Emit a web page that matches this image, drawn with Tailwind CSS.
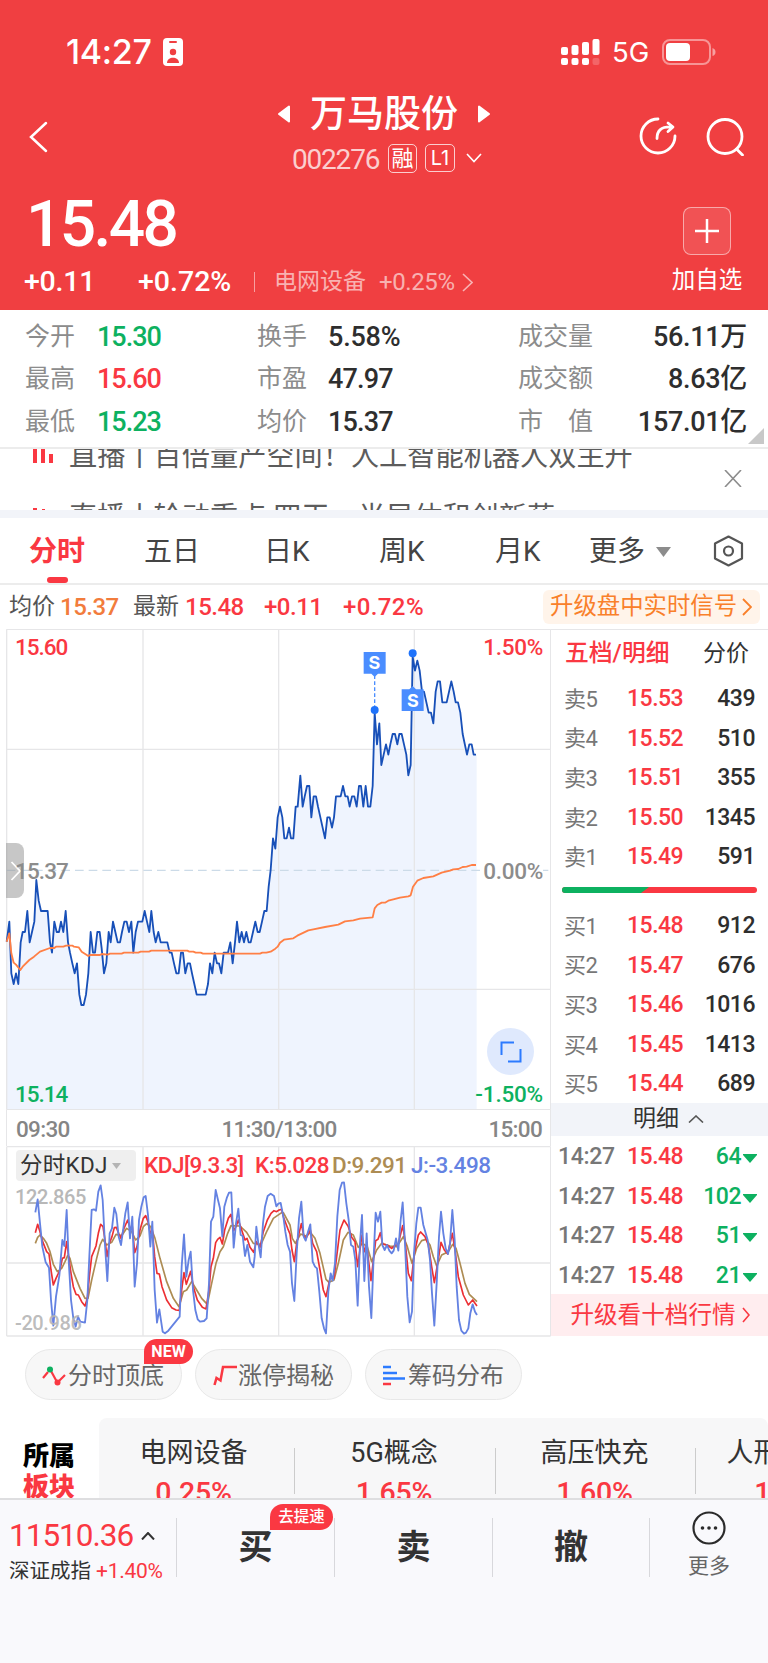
<!DOCTYPE html>
<html lang="zh-CN">
<head>
    <meta charset="UTF-8">
    <meta name="viewport" content="width=device-width, initial-scale=1.0">
    <script src="https://cdn.jsdelivr.net/npm/@tailwindcss/browser@4"></script>
    <title>万马股份 002276</title>
</head>
<body class="w-[768px] bg-white font-['Roboto','Noto_Sans_CJK_SC',sans-serif] text-[#333]">
<div class="flex h-[1663px] flex-col overflow-hidden">

<!-- header -->
<header class="flex h-[310px] shrink-0 flex-col bg-[#f03f41] text-white">
    <div class="flex h-[76px] items-center pl-[66px] pr-[52px] pt-[27px] font-['Inter']">
        <span class="w-[97px] text-[34px] leading-[49px] tracking-[-0.3px] font-medium">14:27</span>
        <svg class="h-7 w-5" viewBox="0 0 20 28"><rect width="20" height="28" rx="4" fill="#fff"/><rect x="6" y="3" width="8" height="2" rx="1" fill="#f03f41"/><circle cx="10" cy="14" r="3.2" fill="#f03f41"/><path d="M4 25c0-7 12-7 12 0z" fill="#f03f41"/></svg>
        <svg class="ml-auto h-7 w-10" viewBox="0 0 40 28" fill="#fff"><rect x="1" y="9" width="7" height="8" rx="2"/><rect x="11.500" y="7" width="7" height="10" rx="2"/><rect x="22" y="4" width="7" height="13" rx="2"/><rect x="32.500" y="1" width="7" height="16" rx="2"/><rect x="1" y="20" width="7" height="7" rx="2"/><rect x="11.500" y="20" width="7" height="7" rx="2"/><rect x="22" y="20" width="7" height="7" rx="2"/><rect x="32.500" y="20" width="7" height="7" rx="2" opacity=".2"/></svg>
        <span class="ml-[12px] w-[50px] pt-[2px] text-[27.500px]">5G</span>
        <svg class="h-[26px] w-[54px]" viewBox="0 0 54 26"><rect x="1" y="1" width="47" height="24" rx="7" fill="none" stroke="#fff" stroke-opacity=".45" stroke-width="2"/><rect x="4" y="4" width="24" height="18" rx="4" fill="#fff"/><path d="M50.500 9q3 1 3 4t-3 4z" fill="#fff" opacity=".5"/></svg>
    </div>
    <div class="flex h-[104px] items-center pl-[28px] pr-[24px]">
        <svg class="mt-[18px] h-8 w-5" viewBox="0 0 20 32" fill="none" stroke="#fff" stroke-width="2.500" stroke-linecap="round"><path d="M18 2L3 16l15 14"/></svg>
        <div class="ml-[145px] w-[382px]">
            <div class="flex h-[52px] items-center justify-center gap-[20px] pt-[18px]">
                <svg class="h-[18px] w-3" viewBox="0 0 12 18" fill="#fff"><path d="M11 1.500v15L1 9z" stroke="#fff" stroke-linejoin="round" stroke-width="2"/></svg>
                <h1 class="pt-px text-[37px] leading-[44px] font-medium">万马股份</h1>
                <svg class="h-[18px] w-3" viewBox="0 0 12 18" fill="#fff"><path d="M1 1.500v15L11 9z" stroke="#fff" stroke-linejoin="round" stroke-width="2"/></svg>
            </div>
            <div class="flex h-[46px] items-center justify-center pl-[6px] pt-[8px]">
                <span class="w-[96px] pt-[3px] text-[28px] tracking-[-1.200px] text-white/75">002276</span>
                <span class="flex h-[29px] w-[29px] items-center justify-center rounded-[5px] border border-white/75 text-[22px]">融</span>
                <span class="ml-2 flex h-[28px] w-[30px] items-center justify-center rounded-[5px] border border-white/75 font-['Inter'] text-[20px]">L1</span>
                <svg class="ml-[11px] h-[10px] w-[16px]" viewBox="0 0 16 10" fill="none" stroke="#fff" stroke-width="1.600"><path d="M1 1l7 7.500L15 1"/></svg>
            </div>
        </div>
        <svg class="ml-auto mt-[16px] h-[38px] w-[38px]" viewBox="0 0 38 38" fill="none" stroke="#fff" stroke-width="2.800" stroke-linecap="round" stroke-linejoin="round"><path d="M19 2A17 17 0 1 0 36 19"/><path d="M18 21.500c0-8 4-12 14.500-11.500M29 6L34 10l-5 4.500"/></svg>
        <svg class="ml-[29px] mt-[18px] h-[38px] w-[38px]" viewBox="0 0 38 38" fill="none" stroke="#fff" stroke-width="2.800" stroke-linecap="round"><circle cx="19" cy="18.500" r="17"/><path d="M30.500 31l6 6"/></svg>
    </div>
    <div class="flex grow justify-between pl-[24px] pr-[23px]">
        <div>
            <p class="h-[78px] pl-[2px] text-[64px] leading-[89px] tracking-[-2.600px] font-medium">15.48</p>
            <div class="flex h-[47px] items-center pt-px text-[28.500px] tracking-[-0.200px] font-medium">
                <span class="w-[114px]">+0.11</span>
                <span class="w-[116px] tracking-normal">+0.72%</span>
                <span class="h-5 w-px bg-white/50"></span>
                <span class="ml-[19px] w-[105px] text-[23px] tracking-normal font-normal text-white/60">电网设备</span>
                <span class="w-[83px] text-[24px] tracking-[-0.400px] font-normal text-white/60">+0.25%</span>
                <svg class="h-[19px] w-[11px]" viewBox="0 0 11 19" fill="none" stroke="#fff" stroke-opacity=".6" stroke-width="1.600"><path d="M1 1l9 8.500L1 18"/></svg>
            </div>
        </div>
        <div class="flex w-[76px] flex-col items-center pt-[27px]">
            <span class="flex h-12 w-12 items-center justify-center rounded-lg border border-white/50 bg-white/10">
                <svg class="h-6 w-6" viewBox="0 0 24 24" stroke="#fff" stroke-width="2.500"><path d="M12 0v24M0 12h24"/></svg>
            </span>
            <span class="mt-[8px] text-[23.500px] leading-[34px]">加自选</span>
        </div>
    </div>
</header>

<!-- quote figures -->
<section class="relative grid h-[139px] shrink-0 grid-cols-[72px_160px_71px_190px_90px_139px] content-start border-b-2 border-[#ececec] pl-[25px] pr-[21px] pt-[6px] leading-[41.300px] text-[25px] text-[#8c8c8c]">
    <span>今开</span><b class="pt-px text-[27px] tracking-[-1px] font-medium text-[#0db160]">15.30</b>
    <span>换手</span><b class="pt-px text-[27px] tracking-[-0.200px] font-medium text-[#2e2e2e]">5.58%</b>
    <span>成交量</span><b class="pt-px text-right text-[27px] tracking-[-0.300px] font-medium text-[#2e2e2e]">56.11万</b>
    <span>最高</span><b class="pt-px text-[27px] tracking-[-1px] font-medium text-[#fa3842]">15.60</b>
    <span>市盈</span><b class="pt-px text-[27px] tracking-[-0.800px] font-medium text-[#2e2e2e]">47.97</b>
    <span>成交额</span><b class="pt-px text-right text-[27px] tracking-[-0.300px] font-medium text-[#2e2e2e]">8.63亿</b>
    <span>最低</span><b class="pt-px text-[27px] tracking-[-1px] font-medium text-[#0db160]">15.23</b>
    <span>均价</span><b class="pt-px text-[27px] tracking-[-0.800px] font-medium text-[#2e2e2e]">15.37</b>
    <span>市　值</span><b class="pt-px text-right text-[27px] tracking-[-0.300px] font-medium text-[#2e2e2e]">157.01亿</b>
    <svg class="absolute bottom-[3px] right-1 h-4 w-4" viewBox="0 0 16 16"><path d="M16 0v16H0z" fill="#c8c8c8"/></svg>
</section>

<!-- scrolling live notices -->
<section class="flex h-[61px] shrink-0 overflow-hidden pl-[32px] pr-[26px] text-[28.200px] leading-[61px] text-[#5c5c5c]">
    <div class="w-[37px] shrink-0">
        <svg class="h-[62px] w-6" viewBox="0 0 24 62" fill="#fa3842"><path d="M1 0h4v14H1zM9 0h4v14H9zM17 5h4v9h-4zM1 59h4v3H1zM10 60h3v2h-3z"/></svg>
    </div>
    <div class="-mt-[23px] grow whitespace-nowrap">
        <p>直播丨百倍量产空间！人工智能机器人双主升</p>
        <p>直播丨轮动重点 四天，半导体和创新药</p>
    </div>
    <svg class="mt-[21px] h-[17px] w-[18px]" viewBox="0 0 18 17" stroke="#8c8c8c" stroke-width="1.600"><path d="M1 0l16 17M17 0L1 17"/></svg>
</section>
<div class="h-2 shrink-0 bg-[#f2f4f9]"></div>

<!-- chart tabs -->
<nav class="flex h-[67px] shrink-0 border-b-2 border-[#ececec] pl-[29px] text-[28px] leading-[67px] text-[#444]">
    <div class="relative w-[115px] font-bold text-[#fa3842]">分时<i class="absolute bottom-0 left-[18px] h-[6px] w-[21px] rounded-full bg-[#fa3842]"></i></div>
    <span class="w-[120px]">五日</span>
    <span class="w-[115px]">日K</span>
    <span class="w-[116px]">周K</span>
    <span class="w-[94px]">月K</span>
    <span class="w-[67px]">更多</span>
    <svg class="mt-[29px] h-[10px] w-[15px]" viewBox="0 0 15 10"><path d="M0 0h15L7.500 10z" fill="#8c8c8c"/></svg>
    <svg class="ml-[42px] mt-[17px] h-8 w-[31px]" viewBox="0 0 31 32" fill="none" stroke="#555" stroke-width="2.200" stroke-linejoin="round"><path d="M15.500 1.500L29 8.500v15l-13.500 7L2 23.500v-15z"/><circle cx="15.500" cy="16" r="4.500"/></svg>
</nav>
<div class="flex h-[44px] shrink-0 items-center pl-[9px] pr-2 text-[24px] tracking-[-0.500px] font-medium text-[#fa3842]">
    <span class="w-[51px] text-[23px] tracking-normal font-normal text-[#555]">均价</span><span class="w-[73px] text-[#f27c3c]">15.37</span>
    <span class="w-[52px] text-[23px] tracking-normal font-normal text-[#555]">最新</span><span class="w-[79px]">15.48</span>
    <span class="w-[79px]">+0.11</span><span class="tracking-[0.400px]">+0.72%</span>
    <a class="ml-auto flex h-[34px] w-[217px] items-center gap-[5px] rounded-md bg-[#fff4ea] pl-[7px] text-[23.400px] tracking-normal font-normal text-[#f9802a]">升级盘中实时信号<svg class="h-[18px] w-[10px]" viewBox="0 0 10 18" fill="none" stroke="#f9802a" stroke-width="1.800"><path d="M1 1l8 8-8 8"/></svg></a>
</div>

<main class="flex h-[709px] shrink-0">
    <div class="w-[551px]">
        <!-- price chart -->
        <div class="relative h-[481px]">
            <svg class="h-[481px] w-[551px]" viewBox="0 0 551 481" fill="none">
                <g transform="translate(0 -9) scale(.33333)" stroke-linejoin="round">
                    <path id="area" fill="#eff4fe"/>
                    <path d="M20 28H1652M20 388H1652M20 1108H1652M20 1469H1652M20 28V1469M429 28V1469M836 28V1469M1243 28V1469M1652 28V1469" stroke="#e6e6e8" stroke-width="4"/>
                    <path d="M20 751H1652" stroke="#ccdbe8" stroke-width="4" stroke-dasharray="26 15"/>
                    <polyline id="price" stroke="#1850b8" stroke-width="5.500" points="20,965 28,905 34,1060 41,1092 48,1060 55,1092 62,967 68,936 75,936 82,873 89,967 96,936 103,905 109,780 116,842 123,873 143,873 150,967 156,998 163,905 170,936 177,936 183,905 190,936 197,873 204,967 210,998 217,1030 224,1060 231,1030 238,1124 244,1155 251,1155 258,1124 265,1060 272,936 279,998 285,998 292,936 299,936 305,985 312,1060 319,1030 326,936 332,967 339,905 346,936 353,967 360,967 366,936 373,905 380,905 387,936 394,905 400,998 407,936 414,905 427,905 434,873 441,905 448,936 454,873 461,936 467,967 475,936 482,967 502,967 509,998 515,998 522,1030 529,1060 536,1060 543,998 549,998 556,1060 563,1030 570,1030 576,1060 583,1092 590,1124 617,1124 624,1092 630,1030 637,1060 644,998 651,1030 657,1030 664,1060 671,998 684,998 691,967 698,1030 705,967 711,905 718,967 725,936 732,967 739,936 746,967 752,967 759,936 766,905 773,936 779,936 786,905 793,873 800,873 806,800 812,750 819,655 826,686 833,592 840,560 847,592 853,655 860,655 867,623 873,655 880,655 887,560 893,560 901,467 908,560 914,530 921,498 928,498 934,592 941,529 948,529 954,560 975,655 982,592 989,592 996,623 1002,592 1008,529 1022,529 1029,498 1036,529 1043,529 1049,560 1056,529 1063,529 1070,560 1077,498 1083,498 1090,560 1097,498 1104,560 1111,560 1118,498 1124,278 1131,373 1138,310 1144,435 1151,404 1158,373 1165,404 1171,373 1178,342 1185,342 1192,373 1198,342 1205,342 1212,373 1219,404 1225,466 1232,435 1238,110 1245,152 1252,122 1259,152 1266,215 1272,215 1286,278 1293,278 1300,310 1307,215 1313,184 1320,184 1327,247 1340,247 1354,184 1361,215 1367,247 1374,247 1381,278 1388,342 1401,404 1408,373 1415,373 1421,404 1428,404"/>
                    <polyline stroke="#ff7f45" stroke-width="5.500" points="20,965 28,940 34,1000 41,1028 48,1034 61,1050 68,1040 88,1020 102,1010 120,995 150,984 163,984 168,980 190,980 198,977 218,977 222,980 236,982 245,995 265,1008 270,1005 300,1005 305,1002 323,1004 330,1001 365,1001 372,998 415,998 422,995 447,995 454,992 562,992 568,995 580,995 587,998 602,998 609,1001 780,1001 787,998 799,998 812,995 826,986 833,980 840,968 852,959 880,955 892,947 925,931 940,928 975,921 1015,914 1035,904 1060,901 1080,896 1118,892 1124,865 1132,855 1145,848 1155,848 1165,842 1180,838 1200,833 1225,829 1232,826 1239,800 1252,782 1270,774 1300,769 1325,758 1350,752 1360,748 1375,747 1388,741 1400,740 1415,735 1428,735"/>
                    <path d="M1124 166V262" stroke="#4a8dff" stroke-width="4" stroke-dasharray="11 7"/>
                    <g fill="#1f73fb"><circle cx="1124" cy="270" r="12"/><circle cx="1238" cy="100" r="12"/></g>
                    <g fill="#4a8dff"><path d="M1091 96h66v65h-23l-10 10-10-10h-23zM1205 208h23l10-10 10 10h23v65h-66z"/></g>
                </g>
                <g fill="#fff" font-family="Inter" font-size="18" font-weight="700" text-anchor="middle"><text x="374.500" y="40.300">S</text><text x="412.800" y="78.300">S</text></g>
            </svg>
            <span class="absolute left-[15px] top-[3px] text-[22.500px] leading-[30px] tracking-[-1px] font-medium text-[#fa3842]">15.60</span>
            <span class="absolute left-[15px] top-[450px] text-[22.500px] leading-[30px] tracking-[-1px] font-medium text-[#0db160]">15.14</span>
            <span class="absolute left-[6px] top-[214px] flex h-[55px] w-[18px] items-center rounded-r-lg bg-[#999]/55 pl-1"><svg class="h-5 w-3" viewBox="0 0 12 20" fill="none" stroke="#fff" stroke-width="1.800"><path d="M1.500 1l8.500 9-8.500 9"/></svg></span>
            <span class="absolute left-[15px] top-[227px] text-[22.500px] leading-[30px] tracking-[-0.900px] font-medium text-[#8c8c8c]">15.37</span>
            <span class="absolute right-[8px] top-[3px] text-[22.500px] leading-[30px] tracking-[-0.300px] font-medium text-[#fa3842]">1.50%</span>
            <span class="absolute right-[8px] top-[227px] bg-white text-[22.500px] leading-[30px] tracking-[-0.300px] font-medium text-[#8c8c8c]">0.00%</span>
            <span class="absolute right-[8px] top-[450px] text-[22.500px] leading-[30px] tracking-[-0.200px] font-medium text-[#0db160]">-1.50%</span>
            <span class="absolute left-[487px] top-[399px] flex h-[47px] w-[47px] items-center justify-center rounded-full bg-[#dfe9fd]"><svg class="h-[22px] w-[22px]" viewBox="0 0 22 22" fill="none" stroke="#2c7bff" stroke-width="2"><path d="M14 1.500H1.500V14M8 20.500h12.500V8"/></svg></span>
        </div>
        <div class="ml-[6px] flex h-[36px] items-center justify-between border-x border-[#e6e6e8] pl-[9px] pr-[8px] pt-1 text-[22.500px] tracking-[-0.700px] font-medium text-[#858585]">
            <span>09:30</span><span>11:30/13:00</span><span>15:00</span>
        </div>
        <!-- KDJ indicator -->
        <div class="relative h-[192px]">
            <span class="absolute left-[15px] top-[33px] text-[20px] leading-[36px] tracking-[-0.400px] font-medium text-[#b8b8b8]">122.865</span>
            <svg class="relative h-[192px] w-[551px]" viewBox="0 0 551 192" fill="none">
                <g transform="translate(0 -36) scale(.33333)" stroke-linejoin="round">
                    <path d="M20 110H1652M20 459H1652M20 678H1652M20 110V678M429 110V678M836 110V678M1243 110V678M1652 110V678" stroke="#e6e6e8" stroke-width="4"/>
                    <polyline stroke="#ad8c53" stroke-width="5" points="106,400 113,382 120,375 130,385 140,400 150,425 160,463 172,485 185,475 195,455 203,437 210,445 220,485 240,535 255,565 264,565 275,510 290,445 300,405 308,388 320,405 335,397 348,373 365,377 380,355 395,365 407,390 420,378 430,350 440,341 452,350 465,385 480,445 500,515 520,565 537,590 550,545 560,540 575,515 590,540 605,565 622,583 635,520 648,460 660,425 670,410 683,370 693,347 720,348 740,367 760,400 783,403 800,365 820,325 845,308 850,308 870,345 877,385 886,400 902,372 917,378 932,368 945,385 960,430 978,508 987,517 1002,510 1015,460 1030,390 1044,367 1060,375 1075,412 1088,400 1102,410 1115,455 1130,420 1145,400 1170,408 1190,410 1210,380 1222,410 1236,460 1250,415 1265,392 1278,388 1290,405 1300,440 1310,468 1325,435 1345,425 1358,403 1368,415 1380,460 1395,520 1408,553 1431,575"/>
                    <polyline stroke="#ec2f33" stroke-width="5" points="106,368 113,343 120,365 128,395 140,425 147,432 153,480 160,525 168,505 180,480 187,445 193,443 200,395 206,440 213,490 220,530 228,553 235,555 245,575 255,588 262,565 268,500 275,440 288,408 295,370 302,343 309,350 315,390 321,440 328,400 336,380 343,353 349,352 356,370 363,385 372,355 383,330 390,355 397,350 404,428 411,410 420,360 430,325 437,317 444,335 451,370 457,360 464,440 471,490 478,492 486,530 500,570 515,593 528,600 538,601 545,540 552,488 559,523 572,484 580,530 592,570 607,592 618,597 627,540 633,470 640,445 647,398 653,388 660,382 667,402 674,360 685,325 693,313 701,362 708,350 715,330 725,360 735,390 741,385 750,412 761,427 769,395 780,412 790,365 802,330 813,310 822,302 830,305 837,300 845,298 850,320 863,355 870,372 876,420 883,455 890,400 904,341 911,375 918,385 931,360 938,400 950,425 960,480 970,540 978,560 990,505 1002,505 1010,440 1020,360 1032,330 1045,350 1055,382 1065,395 1073,470 1086,375 1093,425 1100,405 1113,512 1127,392 1134,388 1141,368 1148,402 1161,405 1175,415 1187,405 1194,405 1208,347 1215,390 1225,490 1234,512 1243,430 1255,375 1262,366 1275,380 1285,405 1295,470 1303,518 1313,460 1323,397 1333,420 1343,432 1357,370 1365,420 1375,500 1390,555 1405,585 1418,570 1431,588"/>
                    <polyline stroke="#6482e2" stroke-width="5.500" points="106,307 113,268 120,340 127,410 137,457 147,473 153,570 160,647 168,560 178,497 187,390 193,408 200,300 206,450 213,570 220,625 227,650 234,620 241,635 255,638 262,570 268,440 275,300 282,298 288,302 295,245 302,226 308,270 315,405 322,513 329,370 336,355 343,293 349,312 356,380 363,405 370,355 376,310 383,277 390,385 397,320 404,530 411,460 417,330 424,290 431,262 437,258 444,315 451,410 457,335 464,540 471,638 478,598 488,665 495,670 505,662 539,620 545,470 552,373 559,500 566,450 572,425 579,540 586,600 593,628 600,635 612,633 620,625 627,520 633,335 640,320 647,240 654,270 660,295 667,380 673,290 681,262 687,248 694,247 701,413 708,340 715,296 722,375 728,378 735,438 742,405 750,455 760,472 764,440 769,350 775,400 782,442 789,340 795,290 803,258 812,251 822,258 829,289 835,281 842,279 850,320 856,365 863,405 870,425 876,520 883,573 890,430 897,325 904,275 911,380 917,392 924,365 931,343 938,455 945,470 951,475 958,545 965,625 972,655 978,670 985,545 992,490 998,512 1005,460 1012,320 1019,240 1026,218 1032,217 1039,280 1046,330 1053,405 1060,410 1066,450 1073,587 1080,400 1086,315 1093,513 1100,370 1107,530 1114,624 1121,440 1127,308 1134,335 1141,305 1147,405 1154,420 1161,405 1168,422 1175,430 1181,422 1188,385 1195,422 1202,330 1208,277 1215,400 1222,560 1229,637 1236,605 1242,430 1249,340 1255,293 1262,293 1270,345 1283,390 1290,450 1296,550 1303,647 1310,520 1317,380 1323,305 1330,370 1337,415 1344,432 1350,400 1357,300 1364,390 1370,530 1377,630 1384,662 1392,671 1398,668 1405,655 1411,610 1418,583 1425,605 1431,615"/>
                </g>
            </svg>
            <span class="absolute left-[15px] top-[159px] text-[20px] leading-[36px] tracking-[-0.400px] font-medium text-[#b4b4b4]/90">-20.986</span>
            <div class="absolute left-[16px] top-[4px] flex h-[31px] items-center text-[22.500px] tracking-[-0.500px] font-medium whitespace-nowrap">
                <span class="flex h-[31px] w-[120px] items-center gap-[4px] rounded bg-[#efefef] pl-1 text-[22.500px] tracking-[0.300px] font-normal">分时KDJ<svg class="h-[6px] w-[9px]" viewBox="0 0 9 6"><path d="M0 0h9L4.500 6z" fill="#b4b4b4"/></svg></span>
                <span class="ml-2 w-[111px] text-[#fa3842]">KDJ[9.3.3]</span>
                <span class="w-[77px] text-[#fa3842]">K:5.028</span>
                <span class="w-[79px] text-[#ad8c53]">D:9.291</span>
                <span class="text-[#6482e2]">J:-3.498</span>
            </div>
        </div>
    </div>

    <!-- order book -->
    <aside class="w-[217px] text-[23px] tracking-[-0.500px]">
        <div class="flex h-[49px] items-center justify-between border-t border-[#e6e6e8] pl-[14px] pr-[19px]"><b class="text-[23.800px] font-medium tracking-normal text-[#fa3842]">五档/明细</b><span class="tracking-normal">分价</span></div>
        <div id="asks"></div>
        <div class="flex h-[29px] items-center px-[11px]"><svg class="h-[6px] w-[195px]" viewBox="0 0 195 6"><rect width="195" height="6" rx="3" fill="#fa3842"/><path d="M3 0h84l-8 6H3a3 3 0 0 1 0-6z" fill="#0db160"/></svg></div>
        <div id="bids"></div>
        <div class="flex h-[33px] items-center justify-center gap-[9px] bg-[#f2f4f9] pl-[18px] tracking-normal">明细<svg class="h-2 w-4" viewBox="0 0 16 8" fill="none" stroke="#555" stroke-width="1.600"><path d="M1 7.500L8 1l7 6.500"/></svg></div>
        <div id="deals"></div>
        <a class="flex h-[42px] items-center justify-center gap-[6px] bg-[#ffedef] pl-px text-[23.600px] tracking-normal text-[#fa3842]">升级看十档行情<svg class="h-4 w-2" viewBox="0 0 8 16" fill="none" stroke="#fa3842" stroke-width="1.600"><path d="M1 1l6 7-6 7"/></svg></a>
    </aside>
</main>

<!-- tool pills -->
<section class="flex h-[80px] shrink-0 gap-[13px] pl-[25px] pt-[11px] text-[24px] text-[#666]">
    <div class="relative flex h-[51px] w-[157px] items-center gap-[2px] rounded-full border border-[#e8e8e8] bg-[#f7f7f7] pl-4 pt-[2px]">
        <svg class="h-6 w-6" viewBox="0 0 24 24" fill="none" stroke="#fa3842" stroke-width="2.200"><path d="M1 14l5-6M9 7l6 11M17 17l6-6"/><circle cx="8" cy="5.500" r="3" fill="#0db160" stroke="none"/><circle cx="15.500" cy="18.500" r="3" fill="#fa3842" stroke="none"/></svg>分时顶底
        <span class="absolute -top-[11px] right-[-12px] flex h-[25px] w-[49px] items-center justify-center rounded-full rounded-bl-none bg-[#fa3842] text-[16px] font-bold text-white">NEW</span>
    </div>
    <div class="flex h-[51px] w-[157px] items-center gap-px rounded-full border border-[#e8e8e8] bg-[#f7f7f7] pl-[17px] pt-[2px]">
        <svg class="h-6 w-6" viewBox="0 0 24 24" fill="none" stroke="#fa3842" stroke-width="2.500"><path d="M1.500 21l2-7 4 2.500L10 3h14"/></svg>涨停揭秘
    </div>
    <div class="flex h-[51px] w-[157px] items-center gap-[2px] rounded-full border border-[#e8e8e8] bg-[#f7f7f7] pl-[16px] pt-[2px]">
        <svg class="h-6 w-6" viewBox="0 0 24 24" fill="none" stroke="#2c7bff" stroke-width="2.500"><path d="M1 3h8M1 9h14M1 14.500h22"/><path d="M1 20h8" stroke="#fa3842"/></svg>筹码分布
    </div>
</section>

<!-- related sectors -->
<section class="flex h-[80px] shrink-0 overflow-hidden">
    <div class="w-[99px] shrink-0 pl-[23px] pt-[23px] text-[26px] leading-[31px] font-black text-black">所属<br><span class="text-[#fa3842]">板块</span></div>
    <div class="flex h-[110px] w-[669px] overflow-hidden rounded-t-lg bg-[#f7f7f8] text-center text-[27px]">
        <div class="relative w-[196px] shrink-0 pr-[7px] pt-[15px] leading-[40px]">电网设备<p class="text-[28.500px] tracking-[-0.200px] font-medium text-[#fa3842]">0.25%</p><i class="absolute right-0 top-[30px] h-[46px] w-px bg-[#ccc]"></i></div>
        <div class="relative w-[201px] shrink-0 pr-[3px] pt-[15px] leading-[40px]">5G概念<p class="text-[28.500px] tracking-[-0.200px] font-medium text-[#fa3842]">1.65%</p><i class="absolute right-0 top-[30px] h-[46px] w-px bg-[#ccc]"></i></div>
        <div class="relative w-[200px] shrink-0 pr-[3px] pt-[15px] leading-[40px]">高压快充<p class="text-[28.500px] tracking-[-0.200px] font-medium text-[#fa3842]">1.60%</p><i class="absolute right-0 top-[30px] h-[46px] w-px bg-[#ccc]"></i></div>
        <div class="w-[196px] shrink-0 pt-[15px] leading-[40px]">人形机器人<p class="pr-[3px] text-[28.500px] tracking-[-0.200px] font-medium text-[#fa3842]">1.48%</p></div>
    </div>
</section>

<!-- bottom bar -->
<footer class="flex grow border-t-2 border-[#dedee0] bg-[#f9f9fc] pt-[18px]">
    <div class="h-[59px] w-[177px] border-r border-[#d8d8dc] pl-[9px]">
        <div class="flex h-[36px] items-center text-[31.500px] tracking-[-1px] text-[#fa3842]">11510.36<svg class="ml-[8px] h-2 w-[14px]" viewBox="0 0 14 8" fill="none" stroke="#333" stroke-width="2"><path d="M1 7.500L7 1l6 6.500"/></svg></div>
        <p class="whitespace-nowrap pt-px text-[20.500px] leading-[32px]">深证成指 <span class="text-[21px] tracking-[-0.300px] text-[#fa3842]">+1.40%</span></p>
    </div>
    <div class="relative h-[59px] w-[158px] border-r border-[#d8d8dc] text-center text-[34px] leading-[59px] font-bold">买<span class="absolute -top-[14px] right-px flex h-[26px] w-[63px] items-center justify-center rounded-full rounded-bl-none bg-[#fa3842] text-[15.500px] font-medium text-white">去提速</span></div>
    <div class="h-[59px] w-[158px] border-r border-[#d8d8dc] text-center text-[34px] leading-[59px] font-bold">卖</div>
    <div class="h-[59px] w-[157px] border-r border-[#d8d8dc] text-center text-[34px] leading-[59px] font-bold">撤</div>
    <div class="-mt-[7px] flex grow flex-col items-center">
        <svg class="h-[34px] w-[34px]" viewBox="0 0 34 34"><circle cx="17" cy="17" r="15.500" fill="none" stroke="#2b2b2b" stroke-width="2.200"/><g fill="#2b2b2b"><circle cx="10.500" cy="17" r="1.800"/><circle cx="17" cy="17" r="1.800"/><circle cx="23.500" cy="17" r="1.800"/></g></svg>
        <span class="mt-[4px] text-[21px] leading-[34px] text-[#666]">更多</span>
    </div>
</footer>
</div>

<script>
    const asks = [['卖5', '15.53', 439], ['卖4', '15.52', 510], ['卖3', '15.51', 355], ['卖2', '15.50', 1345], ['卖1', '15.49', 591]];
    const bids = [['买1', '15.48', 912], ['买2', '15.47', 676], ['买3', '15.46', 1016], ['买4', '15.45', 1413], ['买5', '15.44', 689]];
    const deals = [64, 102, 51, 21];

    const quoteRow = ([label, price, vol]) => `
        <div class="flex h-[39.600px] items-center px-[13px] pt-[3px]">
            <span class="w-[63px] text-[22px] text-[#777]">${label}</span>
            <span class="font-medium text-[#fa3842]">${price}</span>
            <span class="ml-auto font-medium text-[#2e2e2e]">${vol}</span>
        </div>`;
    document.getElementById('asks').innerHTML = asks.map(quoteRow).join('');
    document.getElementById('bids').innerHTML = bids.map(quoteRow).join('');
    document.getElementById('deals').innerHTML = deals.map(vol => `
        <div class="flex h-[39.600px] items-center pl-[7px] pr-[11px] pt-[3px]">
            <span class="w-[69px] tracking-[-0.300px] font-medium text-[#777]">14:27</span>
            <span class="font-medium text-[#fa3842]">15.48</span>
            <span class="ml-auto font-medium text-[#0db160]">${vol}</span>
            <svg class="ml-[2px] mt-[3px] h-[9px] w-[14px] shrink-0" viewBox="0 0 14 9"><path d="M0 0h14v1L7 9 0 1z" fill="#0db160"/></svg>
        </div>`).join('');

    // fill under the price line
    const pts = document.getElementById('price').getAttribute('points');
    document.getElementById('area').setAttribute('d', `M20,1469 L${pts} L1430,404 L1430,1469Z`);
</script>
</body>
</html>
